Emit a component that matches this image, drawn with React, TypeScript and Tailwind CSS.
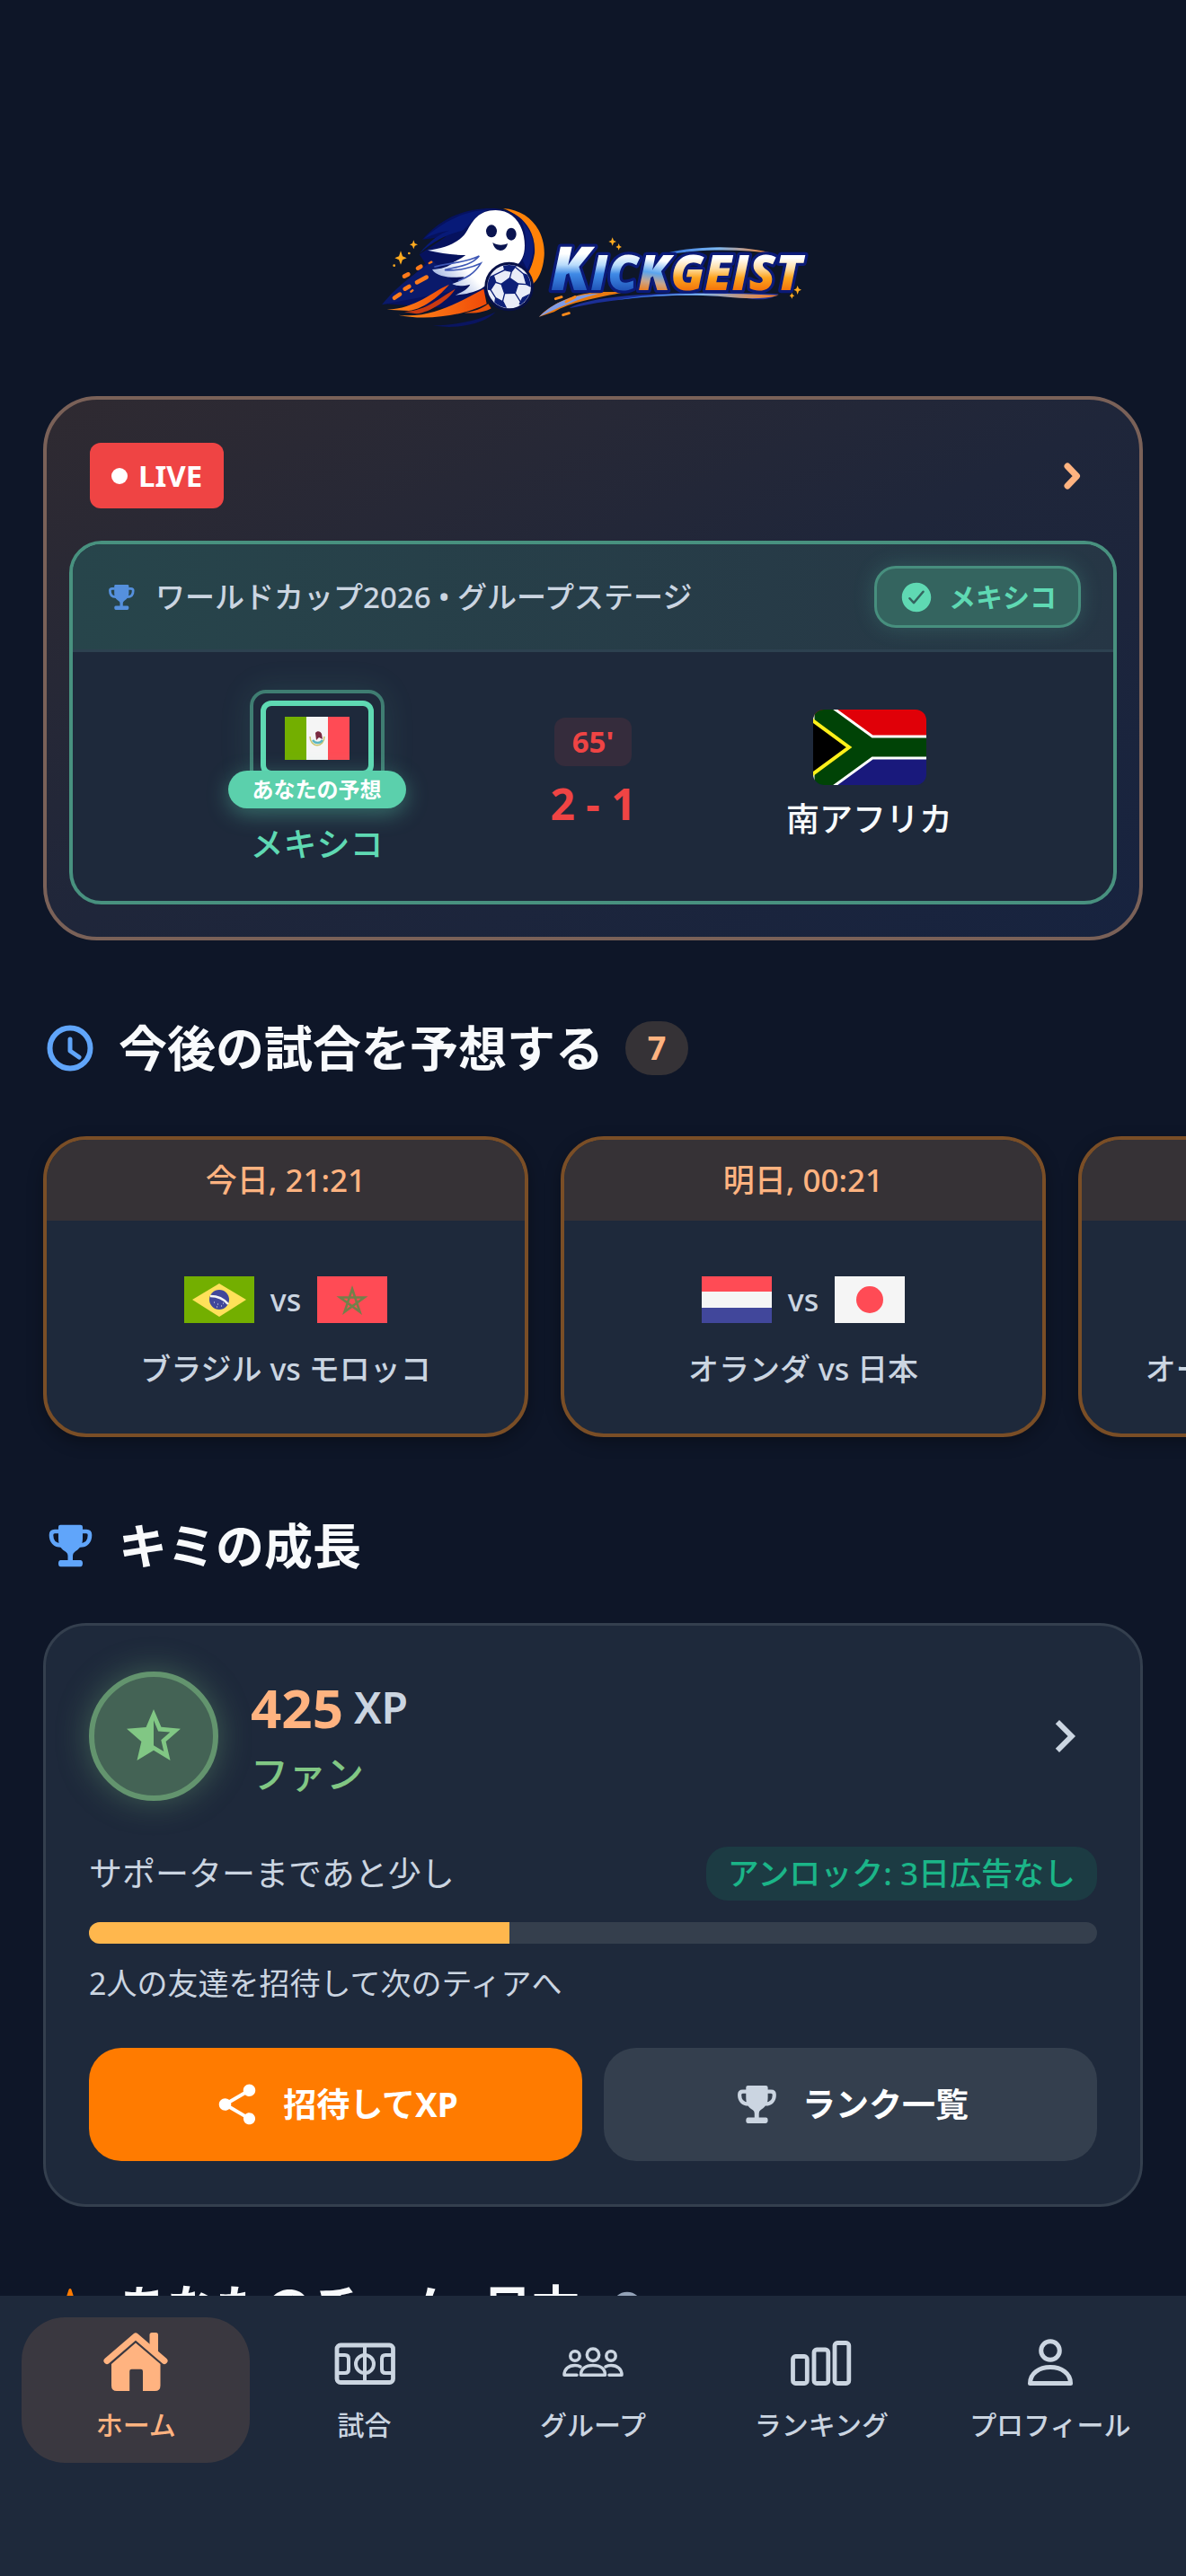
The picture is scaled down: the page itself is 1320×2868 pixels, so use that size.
import type { ReactNode } from 'react'
import { IoCheckmarkCircle, IoInformationCircle, IoStar } from 'react-icons/io5'
import { MdChevronRight, MdShare, MdStarHalf } from 'react-icons/md'

function Logo() {
  return (
    <svg viewBox="0 0 1560 510" className="w-[520px]" role="img" aria-label="Kickgeist">
      <defs>
        <linearGradient id="ice" gradientUnits="userSpaceOnUse" x1="0" y1="195" x2="0" y2="345">
          <stop offset="0.15" stopColor="#ffffff" />
          <stop offset="0.4" stopColor="#b9dcfb" />
          <stop offset="0.6" stopColor="#3f8ae6" />
          <stop offset="1" stopColor="#1d4fb4" />
        </linearGradient>
        <linearGradient id="mix" gradientUnits="userSpaceOnUse" x1="960" y1="220" x2="940" y2="345">
          <stop offset="0.1" stopColor="#ffffff" />
          <stop offset="0.45" stopColor="#5aa4ef" />
          <stop offset="0.7" stopColor="#c9a58c" />
          <stop offset="1" stopColor="#f4770b" />
        </linearGradient>
        <linearGradient id="fire" gradientUnits="userSpaceOnUse" x1="0" y1="220" x2="0" y2="340">
          <stop offset="0.1" stopColor="#ffffff" />
          <stop offset="0.4" stopColor="#ffdca0" />
          <stop offset="0.65" stopColor="#fca41f" />
          <stop offset="1" stopColor="#f4720a" />
        </linearGradient>
        <linearGradient id="ghost" x1="0" y1="0.8" x2="0.7" y2="0.2">
          <stop offset="0" stopColor="#8ea6dd" />
          <stop offset="0.4" stopColor="#ffffff" />
        </linearGradient>
        <linearGradient id="tail" x1="0" y1="0" x2="1" y2="0">
          <stop offset="0" stopColor="#ff8a1a" />
          <stop offset="1" stopColor="#f04a08" />
        </linearGradient>
        <linearGradient id="swoosh" x1="0" y1="0" x2="1" y2="0">
          <stop offset="0" stopColor="#2363d6" />
          <stop offset="0.5" stopColor="#7ab8f5" />
          <stop offset="1" stopColor="#ff7a1a" />
        </linearGradient>
        <clipPath id="ball">
          <circle cx="500" cy="327" r="72" />
        </clipPath>
      </defs>

      {/* Orbit behind the ghost */}
      <path d="M480 66C575 72 622 150 617 225C612 285 590 312 572 325L545 250C600 190 570 100 480 66Z" fill="#ff8208" />
      <path d="M210 170C270 100 350 66 440 66C540 66 590 140 585 215C580 250 565 290 540 310L300 400L85 385L220 250L200 220L290 160Z" fill="#06125e" />
      <path d="M215 168C290 98 370 72 425 72C380 92 365 130 340 142C300 150 250 172 200 218C235 172 270 150 300 140C265 145 240 155 215 168Z" fill="#071a78" />
      <path d="M540 105C592 160 590 215 560 270L545 240C560 200 560 150 540 105Z" fill="#0a1c7a" />
      <path d="M75 388C130 320 180 290 245 240L330 330L300 345Z" fill="#0a1a6b" />
      <path d="M245 458C330 455 400 440 455 412C430 440 370 462 300 462Z" fill="#0a1560" />
      {/* Flames */}
      <path d="M92 404C190 400 240 345 300 320C270 355 220 400 165 408Z" fill="url(#tail)" />
      <path d="M130 422C240 435 330 380 415 335L425 385C350 425 220 442 130 422Z" fill="url(#tail)" />
      <path d="M150 412C230 405 265 365 320 335C300 370 240 412 190 418Z" fill="#c93a12" />
      <path d="M350 415C400 408 420 392 430 385L440 400C420 412 390 418 350 415Z" fill="#e8520a" />
      <g stroke="#ff7a1a" strokeWidth="14" strokeLinecap="round">
        <path d="M150 293L163 286M195 266L205 260M192 313L224 296M152 335L166 327M117 365L135 353" />
        <path d="M233 249L241 245M172 344L178 340" strokeWidth="7" />
      </g>

      {/* Ghost */}
      <path
        d="M455 72C515 72 552 125 552 190C552 225 540 245 520 262L440 300C425 330 390 350 320 356C345 345 362 335 370 320C340 328 320 325 310 318C330 312 345 305 350 295C310 298 260 298 243 270C270 268 300 262 315 245C330 238 345 230 355 222C310 222 270 215 228 206C280 200 320 185 345 160C370 135 380 72 455 72Z"
        fill="url(#ghost)"
      />
      <path d="M250 262C290 248 350 250 400 225C370 262 310 262 285 272C330 276 380 262 405 250C380 290 350 300 330 308" fill="none" stroke="#3e57b5" strokeWidth="5" />
      <ellipse cx="441" cy="142" rx="18" ry="21" fill="#0a1450" />
      <ellipse cx="507" cy="152" rx="17" ry="21" fill="#0a1450" />
      <path d="M445 180C460 190 480 190 495 183C490 215 452 215 445 180Z" fill="#0a1450" />

      {/* Ball */}
      <circle cx="500" cy="327" r="82" fill="#071048" />
      <circle cx="500" cy="327" r="73" fill="#e9ecf8" />
      <g clipPath="url(#ball)" fill="#0d1f78" stroke="#0d1f78" strokeWidth="4" strokeLinejoin="round">
        <path d="M502 299L530 318L520 349L485 350L474 319Z" />
        <path d="M480 250L525 255L508 277L485 272Z" />
        <path d="M425 300L448 290L455 312L438 338L422 335Z" />
        <path d="M548 285L580 295L578 330L558 320Z" />
        <path d="M545 365L575 350L550 395L535 385Z" />
        <path d="M455 365L480 378L492 402L450 395Z" />
        <path d="M502 299L508 277M530 318L558 320M520 349L538 378M485 350L478 378M474 319L452 312M448 290L485 272M438 338L455 365M548 285L520 262" fill="none" />
      </g>

      {/* Sparkles */}
      <g fill="#ffab1f">
        <path d="M138 208L144 226L158 232L144 238L138 254L132 238L118 232L132 226Z" />
        <path d="M181 172L185 183L195 187L185 191L181 202L177 191L168 187L177 183Z" />
        <path d="M845 163L849 173L858 177L849 181L845 191L841 181L832 177L841 173Z" />
        <path d="M866 183L869 191L876 195L869 198L866 206L863 198L856 195L863 191Z" />
        <path d="M1463 324L1467 334L1476 338L1467 342L1463 354L1459 342L1450 338L1459 334Z" />
        <path d="M1444 348L1447 355L1453 358L1447 361L1444 368L1441 361L1436 358L1441 355Z" />
        <circle cx="116" cy="257" r="4" />
        <circle cx="166" cy="216" r="4" />
      </g>

      {/* Word mark */}
      <path d="M1000 222C1120 185 1300 190 1385 218C1300 205 1200 202 1110 210Z" fill="url(#swoosh)" />
      <path d="M600 428C640 385 720 345 820 345L890 345C790 365 700 380 650 412Z" fill="#e97a10" />
      <path d="M600 428C660 370 720 355 800 350C720 372 670 395 600 428Z" fill="#7f9be6" />
      <path d="M700 400C780 350 1100 340 1400 352C1370 375 1330 372 1290 365C1100 345 880 360 700 400Z" fill="#1b2f96" />
      <path d="M860 372C1000 345 1200 348 1400 356C1340 372 1280 366 1230 362C1100 350 960 358 860 372Z" fill="url(#swoosh)" />
      <path d="M680 422L700 416M655 368L675 362M690 378L720 362" stroke="#ff8a1a" strokeWidth="9" strokeLinecap="round" />
      <text
        x="638"
        y="340"
        fontFamily="'Open Sans', 'Noto Sans', sans-serif"
        fontStyle="italic"
        fontWeight="800"
        fontSize="162"
        stroke="#0a1a78"
        strokeWidth="20"
        strokeLinejoin="round"
        paintOrder="stroke"
      >
        <tspan fontSize="200" fill="url(#ice)">K</tspan>
        <tspan fill="url(#ice)">IC</tspan>
        <tspan fill="url(#mix)">K</tspan>
        <tspan fill="url(#fire)">GEIST</tspan>
      </text>
    </svg>
  )
}

/* Flags */

function MexicoFlag() {
  return (
    <svg viewBox="0 0 72 48" className="w-18" role="img" aria-label="メキシコ">
      <path d="M0 0H24V48H0Z" fill="#73af00" />
      <path d="M24 0H48V48H24Z" fill="#f5f5f5" />
      <path d="M48 0H72V48H48Z" fill="#ff4b55" />
      <path d="M28 22C28 35 44 35 44 22" fill="none" stroke="#c9c46a" strokeWidth="1.5" />
      <path d="M31 26C34 30 39 30 42 26" fill="none" stroke="#5cb6c0" strokeWidth="2.5" />
      <path d="M34 18C36 15 40 16 41 19L42 25L38 23L35 26Z" fill="#7a2a40" />
    </svg>
  )
}

function SouthAfricaFlag() {
  return (
    <svg viewBox="0 0 126 84" className="w-[126px] rounded-xl" role="img" aria-label="南アフリカ">
      <path d="M0 0H126V42H0Z" fill="#e00008" />
      <path d="M0 42H126V84H0Z" fill="#19197c" />
      <path d="M0 -18L66 30H132V54H66L0 102Z" fill="#004306" stroke="#ffffff" strokeWidth="3" />
      <path d="M-6 8L40 42L-6 76Z" fill="#000000" stroke="#fff01a" strokeWidth="4" />
    </svg>
  )
}

function BrazilFlag() {
  return (
    <svg viewBox="0 0 78 52" className="w-[78px]" aria-hidden="true">
      <path d="M0 0H78V52H0Z" fill="#73af00" />
      <path d="M39 8L69 26L39 45L9 26Z" fill="#ffe15a" />
      <circle cx="39" cy="26" r="11" fill="#41479b" />
      <path d="M29 22C37 22 44 25 49 31" fill="none" stroke="#f5f5f5" strokeWidth="2.5" />
      <path d="M33 29h1M37 31h1M41 33h1M36 34h1M43 30h1" stroke="#f5f5f5" />
    </svg>
  )
}

function MoroccoFlag() {
  return (
    <svg viewBox="0 0 78 52" className="w-[78px]" aria-hidden="true">
      <path d="M0 0H78V52H0Z" fill="#ff4b55" />
      <path d="M39 14L47.5 39.5L25.5 23.5H52.5L30.5 39.5Z" fill="none" stroke="#73804a" strokeWidth="2.6" />
    </svg>
  )
}

function NetherlandsFlag() {
  return (
    <svg viewBox="0 0 78 52" className="w-[78px]" aria-hidden="true">
      <path d="M0 0H78V18H0Z" fill="#ff4b55" />
      <path d="M0 17H78V35H0Z" fill="#f5f5f5" />
      <path d="M0 35H78V52H0Z" fill="#41479b" />
    </svg>
  )
}

function JapanFlag() {
  return (
    <svg viewBox="0 0 78 52" className="w-[78px]" aria-hidden="true">
      <path d="M0 0H78V52H0Z" fill="#f5f5f5" />
      <circle cx="39" cy="26" r="15" fill="#ff4b55" />
    </svg>
  )
}

function AustriaFlag() {
  return (
    <svg viewBox="0 0 78 52" className="w-[78px]" aria-hidden="true">
      <path d="M0 0H78V52H0Z" fill="#ff4b55" />
      <path d="M0 17H78V35H0Z" fill="#f5f5f5" />
    </svg>
  )
}

function JordanFlag() {
  return (
    <svg viewBox="0 0 78 52" className="w-[78px]" aria-hidden="true">
      <path d="M0 0H78V17H0Z" fill="#464655" />
      <path d="M0 17H78V35H0Z" fill="#f5f5f5" />
      <path d="M0 35H78V52H0Z" fill="#73af00" />
      <path d="M0 0L39 26L0 52Z" fill="#ff4b55" />
    </svg>
  )
}

/* Icons */

function TrophyIcon({ className }: { className: string }) {
  return (
    <svg viewBox="0 0 60 60" className={className} fill="currentColor" aria-hidden="true">
      <path d="M17 9Q17 6.700 19.300 6.700H41.500Q44 6.700 44 9V22C44 31 39 34 35 37Q33 38.500 33 41V46H41.500Q44 46 44 49.500T41.500 53.300H19.500Q17 53.300 17 49.700T19.500 46H27.500V41Q27.500 38.500 25.500 37C21 34 17 31 17 22Z" />
      <path d="M18 14H13Q9 14 9 18C9 25 13 29.500 20 29.500M43 14H48Q52 14 52 18C52 25 48 29.500 41 29.500" fill="none" stroke="currentColor" strokeWidth="4.600" />
    </svg>
  )
}

function ClockIcon() {
  return (
    <svg viewBox="0 0 60 60" className="size-15 text-[#60a5fa]" fill="none" stroke="currentColor" strokeLinecap="round" strokeLinejoin="round" aria-hidden="true">
      <circle cx="30" cy="30" r="22.5" strokeWidth="6" />
      <path d="M30 20V33L40 40" strokeWidth="5" />
    </svg>
  )
}

function HomeIcon() {
  return (
    <svg viewBox="0 0 84 84" className="size-21" fill="currentColor" aria-hidden="true">
      <path d="M57.5 24V11.500Q57.5 9 60 9H64.500Q67 9 67 11.500V32Z" />
      <path d="M10 40.500L42 13L74 40.500" fill="none" stroke="currentColor" strokeWidth="7" strokeLinecap="round" strokeLinejoin="round" />
      <path d="M42 20.500L69.500 44V68Q69.500 74 63.500 74H50V52Q50 49.700 47.700 49.700H37.500Q35.200 49.700 35.200 52V74H21Q15 74 15 68V44Z" />
    </svg>
  )
}

function PitchIcon() {
  return (
    <svg viewBox="0 0 84 84" className="size-21" fill="none" stroke="currentColor" strokeWidth="4" aria-hidden="true">
      <rect x="11" y="23" width="62.500" height="41.500" rx="4" strokeWidth="4.800" />
      <path d="M42 23V64" />
      <circle cx="42" cy="44" r="10" />
      <path d="M12 34H20Q24 34 24 38V50Q24 54 20 54H12M73 34H65Q61 34 61 38V50Q61 54 65 54H73" />
    </svg>
  )
}

function GroupIcon() {
  return (
    <svg viewBox="0 0 84 84" className="size-21" fill="none" stroke="currentColor" strokeWidth="3.500" strokeLinejoin="round" strokeLinecap="round" aria-hidden="true">
      <circle cx="42" cy="33.700" r="6.700" />
      <circle cx="22" cy="35" r="5.200" />
      <circle cx="62" cy="35" r="5.200" />
      <path d="M28.500 56.200C28.500 49 34 45.500 42 45.500S55.500 49 55.500 56.200Z" />
      <path d="M24 56.200H10C10 50 14.500 45.500 22 45.500C24.500 45.500 26.500 46 28 47" />
      <path d="M60 56.200H74C74 50 69.500 45.500 62 45.500C59.500 45.500 57.500 46 56 47" />
    </svg>
  )
}

function RankingIcon() {
  return (
    <svg viewBox="0 0 84 84" className="size-21" fill="none" stroke="currentColor" strokeWidth="4.800" aria-hidden="true">
      <rect x="10.500" y="35.500" width="15.800" height="30" rx="3" />
      <rect x="34" y="28" width="15.800" height="37.500" rx="3" />
      <rect x="57" y="20.500" width="15.800" height="45" rx="3" />
    </svg>
  )
}

function ProfileIcon() {
  return (
    <svg viewBox="0 0 84 84" className="size-21" fill="none" stroke="currentColor" strokeWidth="5" strokeLinejoin="round" aria-hidden="true">
      <circle cx="42" cy="29" r="10.300" />
      <path d="M19.500 65.500C19.500 54 30 47.500 42 47.500S64.500 54 64.500 65.500Z" />
    </svg>
  )
}

type Match = { time: string; home: string; away: string; homeFlag: ReactNode; awayFlag: ReactNode }

const matches: Match[] = [
  { time: '今日, 21:21', home: 'ブラジル', away: 'モロッコ', homeFlag: <BrazilFlag />, awayFlag: <MoroccoFlag /> },
  { time: '明日, 00:21', home: 'オランダ', away: '日本', homeFlag: <NetherlandsFlag />, awayFlag: <JapanFlag /> },
  { time: '明日, 03:21', home: 'オーストリア', away: 'ヨルダン', homeFlag: <AustriaFlag />, awayFlag: <JordanFlag /> },
]

const tabs = [
  { label: 'ホーム', icon: <HomeIcon />, active: true },
  { label: '試合', icon: <PitchIcon />, active: false },
  { label: 'グループ', icon: <GroupIcon />, active: false },
  { label: 'ランキング', icon: <RankingIcon />, active: false },
  { label: 'プロフィール', icon: <ProfileIcon />, active: false },
]

function LiveMatch() {
  return (
    <section className="rounded-[60px] border-4 border-[#7a6158] bg-linear-to-br from-[#2f2a31] via-[#1f263a] to-[#17233f] px-[25px] pt-12 pb-9">
      <div className="flex items-center justify-between pl-[23px]">
        <span className="flex h-[73px] items-center gap-3 rounded-xl bg-[#ef4444] px-6 text-[33px] leading-10 font-bold text-white">
          <span className="size-[18px] rounded-full bg-white" />
          LIVE
        </span>
        <a href="#live" aria-label="試合の詳細" className="mr-5 text-[#ffb380]">
          <svg viewBox="0 0 60 60" className="size-15" fill="none" stroke="currentColor" strokeWidth="7" strokeLinecap="round" strokeLinejoin="round">
            <path d="M25 19L35.500 30L25 41" />
          </svg>
        </a>
      </div>

      <div className="mt-9 overflow-hidden rounded-[36px] border-4 border-[#48917f] bg-[#1e293b]">
        <div className="flex h-30 items-center border-b-3 border-[#2d4150] bg-linear-to-r from-[#27454b] to-[#263645] pr-9 pl-9 text-[#cbd5e1]">
          <TrophyIcon className="size-9 text-[#5590dd]" />
          <span className="ml-5 text-[33px] leading-12 font-medium">ワールドカップ2026 • グループステージ</span>
          <span className="ml-auto flex h-[69px] items-center gap-4 rounded-3xl border-3 border-[#478f7e] bg-[#34645f] px-6 text-[30px] leading-10 font-bold text-[#5fd9b3] shadow-[0_0_24px_rgba(95,217,179,0.2)]">
            <IoCheckmarkCircle className="size-10" />
            メキシコ
          </span>
        </div>

        <div className="flex items-center px-9 pt-[42px] pb-[39px]">
          <div className="flex flex-1 flex-col items-center">
            <div className="relative rounded-[18px] border-4 border-[#3f7d72] p-2 shadow-[0_0_36px_rgba(95,217,179,0.12)]">
              <div className="flex h-21 w-[126px] items-center justify-center rounded-xl border-6 border-[#5fd9b3]">
                <MexicoFlag />
              </div>
              <span className="absolute -bottom-7 left-1/2 flex h-[42px] -translate-x-1/2 items-center rounded-full bg-[#5bd0ac] px-[27px] text-2xl font-bold whitespace-nowrap text-white shadow-[0_6px_24px_rgba(95,217,179,0.4)]">
                あなたの予想
              </span>
            </div>
            <span className="mt-10 text-[37px] leading-12 font-medium text-[#5fd9b3]">メキシコ</span>
          </div>
          <div className="flex w-36 flex-col items-center pb-2 font-bold text-[#ef4444]">
            <span className="flex h-[54px] items-center rounded-xl bg-[#352c3c] px-5 text-[33px] leading-12">65'</span>
            <span className="mt-3 text-5xl leading-15 whitespace-nowrap">2 - 1</span>
          </div>
          <div className="flex flex-1 flex-col items-center pb-2">
            <SouthAfricaFlag />
            <span className="mt-4 text-[37px] leading-11 font-medium text-[#f8fafc]">南アフリカ</span>
          </div>
        </div>
      </div>
    </section>
  )
}

function MatchCard({ match }: { match: Match }) {
  return (
    <a href="#match" className="flex w-[540px] shrink-0 flex-col overflow-hidden rounded-[48px] border-4 border-[#7a4e26] bg-[#1e293b] text-center text-[34px] leading-12 shadow-[0_6px_18px_rgba(0,0,0,0.3)]">
      <span className="bg-[#363236] py-[21px] text-[35px] font-medium text-[#ffb380]">{match.time}</span>
      <span className="flex items-center justify-center gap-[18px] pt-[62px] font-medium text-[#cbd5e1]">
        {match.homeFlag}
        vs
        {match.awayFlag}
      </span>
      <span className="pt-[27px] pb-12 font-medium text-[#cbd5e1]">
        {match.home} vs {match.away}
      </span>
    </a>
  )
}

function Progress() {
  return (
    <section className="rounded-[48px] border-3 border-[#343f4e] bg-[#1e293b] px-12 pt-[51px] pb-12">
      <a href="#rank" className="flex items-center gap-9">
        <span className="flex size-36 items-center justify-center rounded-full border-6 border-[#63946e] bg-[#446355] text-[#81c784] shadow-[0_0_36px_rgba(129,199,132,0.35)]">
          <MdStarHalf className="size-18" />
        </span>
        <span className="flex flex-col pt-1">
          <span className="flex items-center gap-3">
            <span className="text-[60px] leading-18 font-bold text-[#ffb380]">425</span>
            <span className="text-5xl leading-18 font-semibold text-[#cbd5e1]">XP</span>
          </span>
          <span className="mt-2 text-[42px] leading-15 font-medium text-[#81c784]">ファン</span>
        </span>
        <MdChevronRight className="ml-auto size-18 text-[#cbd5e1]" />
      </a>

      <div className="mt-[51px] flex items-center justify-between">
        <span id="tier" className="text-[37px] leading-12 text-[#cbd5e1]">サポーターまであと少し</span>
        <span className="rounded-3xl bg-[#1c3b43] px-6 py-[6px] text-[35px] leading-12 font-medium text-[#1bb588]">
          アンロック: 3日広告なし
        </span>
      </div>
      <div role="progressbar" aria-labelledby="tier" aria-valuenow={42} className="mt-6 h-6 overflow-hidden rounded-full bg-[#353f4d]">
        <div className="h-full w-5/12 bg-[#ffb74d]" />
      </div>
      <p className="mt-5 text-[34px] leading-12 text-[#cbd5e1]">2人の友達を招待して次のティアへ</p>

      <div className="mt-12 flex gap-6 text-[37px] leading-12 font-bold text-white">
        <button type="button" className="flex h-[126px] flex-1 items-center justify-center gap-6 rounded-[36px] bg-[#ff7b00]">
          <MdShare className="size-[54px]" />
          招待してXP
        </button>
        <button type="button" className="flex h-[126px] flex-1 items-center justify-center gap-6 rounded-[36px] bg-[#343f4e]">
          <TrophyIcon className="size-[54px] text-[#cbd5e1]" />
          ランク一覧
        </button>
      </div>
    </section>
  )
}

export default function App() {
  return (
    <div className="flex h-screen flex-col overflow-hidden bg-[#0e1628] font-['Noto_Sans','Noto_Sans_CJK_JP',sans-serif]" lang="ja">
      <main className="min-h-0 flex-1 overflow-y-auto [scrollbar-width:none]">
        <header className="flex justify-center pt-[210px] pb-[61px]">
          <Logo />
        </header>

        <div className="px-12">
          <LiveMatch />
        </div>

        {/* Upcoming matches */}
        <div className="mt-[90px] flex items-center gap-6 px-12">
          <ClockIcon />
          <h2 className="text-[54px] leading-15 font-bold text-[#f8fafc]">今後の試合を予想する</h2>
          <span className="flex h-15 w-[70px] items-center justify-center rounded-full bg-[#353236] text-4xl font-bold text-[#ffb380]">7</span>
        </div>
        <div className="mt-11 flex gap-9 overflow-x-auto px-12 py-6 [scrollbar-width:none]">
          {matches.map((match) => (
            <MatchCard key={match.home} match={match} />
          ))}
        </div>

        {/* Progress */}
        <div className="mt-[67px] flex items-center gap-6 px-12">
          <TrophyIcon className="size-15 text-[#60a5fa]" />
          <h2 className="text-[54px] leading-15 font-bold text-[#f8fafc]">キミの成長</h2>
        </div>
        <div className="mt-14 px-12">
          <Progress />
        </div>

        {/* Team */}
        <div className="mt-[82px] flex items-center gap-6 px-12 pb-12">
          <IoStar className="mx-[6px] size-12 text-[#ff7b00]" />
          <h2 className="text-[54px] leading-15 font-bold text-[#f8fafc]">あなたのチーム: 日本</h2>
          <IoInformationCircle className="mx-[6px] size-11 text-[#94a3b8]" />
        </div>
      </main>

      <nav className="flex bg-[#1e293b] px-6 pt-6 pb-[126px]">
        {tabs.map((tab) => (
          <a
            key={tab.label}
            href="#tab"
            className={`flex min-w-0 flex-1 flex-col items-center rounded-[48px] pb-[22px] text-[30px] leading-10 font-medium whitespace-nowrap ${tab.active ? 'bg-[#3a3840] text-[#ffb380]' : 'text-[#cbd5e1]'}`}
          >
            <span className="flex h-25 items-center">{tab.icon}</span>
            {tab.label}
          </a>
        ))}
      </nav>
    </div>
  )
}
